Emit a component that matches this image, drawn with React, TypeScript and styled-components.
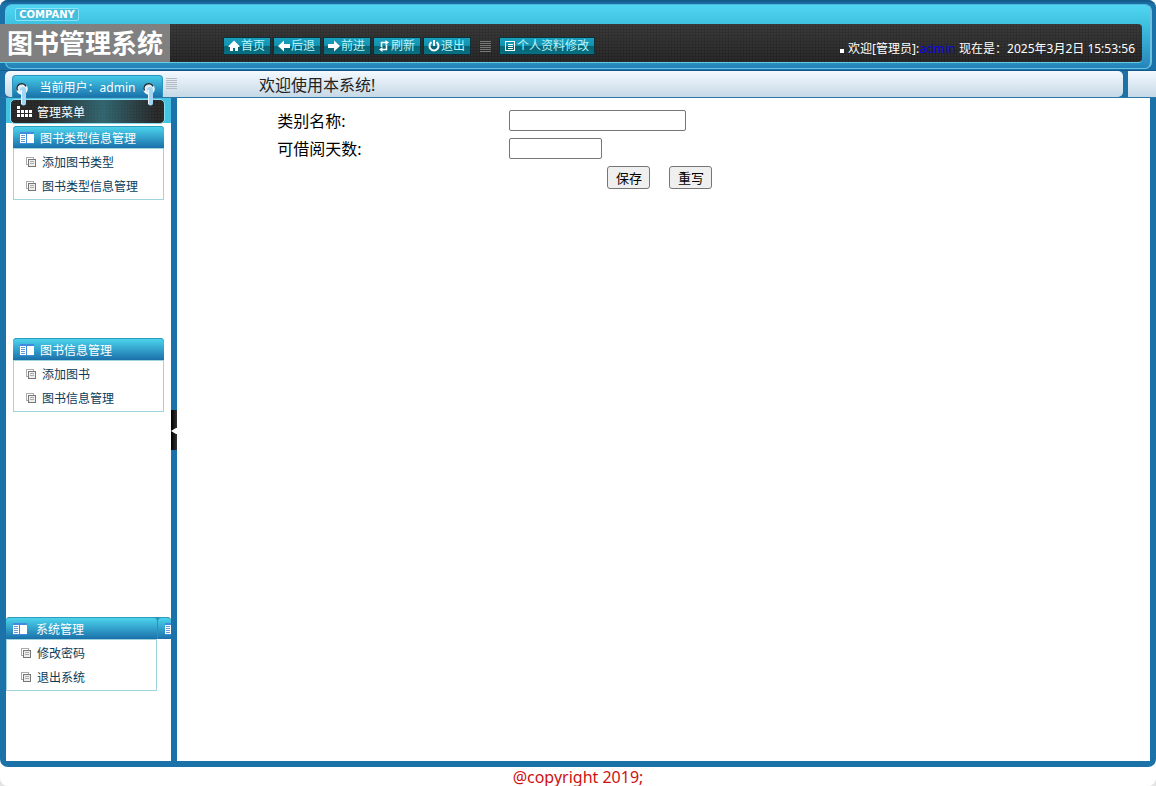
import React, { useState } from "react";
import styled, { createGlobalStyle, css } from "styled-components";

const FRAME = "#1a72a8";
const FONT = '"Noto Sans", "Noto Sans CJK SC", sans-serif';

const GlobalStyle = createGlobalStyle`
  * { box-sizing: border-box; }
  html { background: #e4e4e4; }
  body {
    margin: 0;
    font-family: ${FONT};
    font-size: 12px;
    color: #000;
  }
`;

const Page = styled.div`
  display: flex;
  flex-direction: column;
  height: 100vh;
  overflow: hidden;
  background: #fff;
  border-radius: 0 0 8px 8px;
`;

const Shell = styled.div`
  flex: 1;
  min-height: 0;
  display: flex;
  flex-direction: column;
  background: ${FRAME};
  border-radius: 8px;
  overflow: hidden;
`;

const dotted = css`
  background-image: radial-gradient(circle at 1px 1px, rgba(120, 120, 120, 0.35) 0, transparent 1px),
    linear-gradient(#343434, #222);
  background-size: 3px 3px, 100% 100%;
`;

const Header = styled.header`
  display: flex;
  flex-direction: column;
  height: 70px;
  flex: none;
  background: linear-gradient(#145684 0, ${FRAME} 4px);
`;

const HeaderPanel = styled.div`
  flex: 1;
  margin: 4px 4px 1px 5px;
  padding-right: 8px;
  border: 1px solid #63c4e4;
  border-top-color: #52b4d8;
  border-right: 2px solid #6cc0e0;
  border-radius: 7px;
  background: linear-gradient(#50d6f2 0, #3fc1e0 19px, #2a8cbf 58px, #2482b8 100%);
`;

const BrandRow = styled.div`
  height: 19px;
  padding: 3px 0 0 9px;
`;

const CompanyBadge = styled.span`
  display: block;
  width: 64px;
  height: 13px;
  border: 1px solid #8be2f4;
  border-radius: 2px;
  background: #43bede;
  color: #fff;
  font: bold 10px/11px "DejaVu Sans", sans-serif;
  text-align: center;
`;

const DarkBar = styled.div`
  display: flex;
  height: 39px;
  margin-left: -6px;
  border-bottom: 1px solid #62cfe6;
  border-radius: 0 4px 4px 0;
  ${dotted}
`;

const Logo = styled.h1`
  width: 170px;
  height: 38px;
  margin: 0;
  background: #808080;
  color: #fff;
  font-size: 26px;
  line-height: 38px;
  font-weight: 700;
  text-align: center;
  white-space: nowrap;
`;

const Toolbar = styled.nav`
  display: flex;
  align-items: center;
  gap: 2px;
  margin-left: 53px;
  padding-top: 5px;
`;

const ToolButton = styled.button`
  display: flex;
  align-items: center;
  gap: 1px;
  height: 18px;
  padding: 0 5px 0 4px;
  border: 1px solid #0c2f38;
  background: linear-gradient(#18a0bf 0, #1391af 50%, #066577 50%, #087083 100%);
  color: #b9f4fb;
  font: 12px/16px ${FONT};
  white-space: nowrap;
  cursor: pointer;
`;

const GripLines = styled.span<{ $color: string }>`
  width: 11px;
  height: 12px;
  background: repeating-linear-gradient(${(p) => p.$color} 0 1px, transparent 1px 2px);
`;

const ToolGap = styled.span`
  display: flex;
  padding: 2px 6px 0 7px;
`;

const Status = styled.p`
  display: flex;
  align-items: center;
  margin: 0 7px 0 auto;
  padding-top: 11px;
  color: #fff;
  line-height: 18px;
  white-space: nowrap;
`;

const Bullet = styled.span`
  width: 4px;
  height: 4px;
  margin: 4px 4px 0 0;
  background: #fff;
`;

const UserLink = styled.a`
  margin-right: 4px;
  color: #0c08d8;
  text-decoration: none;
`;

const TabBar = styled.div`
  display: flex;
  flex: none;
  height: 28px;
  gap: 5px;
  padding-left: 5px;
  border-top: 1px solid #14598a;
  border-bottom: 1px solid #2a76a4;
  background: ${FRAME};
`;

const silver = css`
  background: linear-gradient(#f3f9ff, #c6d9e6);
`;

const TabMain = styled.div`
  flex: 1;
  display: flex;
  border-radius: 5px;
  ${silver}
`;

const TabRest = styled.div`
  width: 28px;
  ${silver}
`;

const UserTab = styled.div`
  position: relative;
  width: 151px;
  height: 22px;
  margin: 4px 3px 0 7px;
  border: 1px solid #2b93bc;
  border-bottom: 0;
  border-radius: 4px 4px 0 0;
  background: linear-gradient(#45cbe8, #1a73ac);
  color: #fff;
  line-height: 23px;
  text-align: center;
`;

const Hook = styled.svg<{ $side: "left" | "right" }>`
  position: absolute;
  z-index: 2;
  top: 6px;
  ${(p) => (p.$side === "left" ? "left: 3px;" : "right: 6px;")}
`;

const TabGrip = styled.span`
  display: flex;
  padding-top: 7px;
`;

const Welcome = styled.p`
  margin: 0 0 0 82px;
  color: #222;
  font-size: 16px;
  line-height: 28px;
`;

const Body = styled.div`
  flex: 1;
  min-height: 0;
  display: grid;
  grid-template-columns: 165px 6px 1fr;
  padding: 0 6px 6px;
`;

const Sidebar = styled.aside`
  display: flex;
  flex-direction: column;
  background: #fff;
  overflow: hidden;
`;

const MenuTitleWrap = styled.div`
  flex: none;
  height: 25px;
  padding: 1px 6px 0 4px;
  background: #45c2e2;
`;

const MenuTitle = styled.h2`
  display: flex;
  align-items: center;
  gap: 4px;
  height: 25px;
  margin: 0;
  padding: 2px 0 0 6px;
  border: 1px solid #8adcf0;
  border-radius: 5px;
  background-image: radial-gradient(circle at 1px 1px, rgba(120, 120, 120, 0.3) 0, transparent 1px),
    linear-gradient(90deg, #262626 20%, #2f6570 60%, #262626 95%);
  background-size: 3px 3px, 100% 100%;
  color: #fff;
  font-size: 12px;
  line-height: 22px;
  font-weight: 400;
`;

const GroupStack = styled.div`
  padding-top: 3px;
`;

const Group = styled.section<{ $space: number; $flush?: boolean }>`
  flex: none;
  height: ${(p) => p.$space}px;
  padding: ${(p) => (p.$flush ? "0" : "0 7px")};
`;

const GroupHeads = styled.div`
  display: flex;
  gap: 1px;
  background: #2a93ba;
`;

const GroupHead = styled.h3<{ $rest?: boolean; $gap?: number }>`
  flex: ${(p) => (p.$rest ? "1" : "0 0 151px")};
  display: flex;
  align-items: center;
  gap: ${(p) => p.$gap ?? 6}px;
  height: 22px;
  margin: 0;
  padding: 3px 0 0 7px;
  border-top: 1px solid #2d9dbd;
  border-radius: 4px 4px 0 0;
  background: linear-gradient(#4cd3ec, #1a70aa);
  color: #fff;
  font-size: 12px;
  line-height: 18px;
  font-weight: 400;
  overflow: hidden;
`;

const GroupHeadsClip = styled(GroupHeads)`
  border-radius: 4px 4px 0 0;
`;

const MenuList = styled.ul<{ $indent: number }>`
  width: 151px;
  margin: 0;
  padding: 1px 0 1px ${(p) => p.$indent}px;
  border: 1px solid #9fd3dd;
  list-style: none;
`;

const MenuLink = styled.a`
  display: flex;
  align-items: center;
  gap: 6px;
  height: 24px;
  padding-top: 2px;
  color: #0a3c5a;
  line-height: 22px;
  text-decoration: none;
`;

const Divider = styled.div`
  display: flex;
  align-items: center;
`;

const Handle = styled.button`
  width: 6px;
  height: 40px;
  padding: 2px 0 0;
  border: 0;
  background: linear-gradient(90deg, #000, #333);
  line-height: 0;
  cursor: pointer;
`;

const Content = styled.main`
  padding-top: 9px;
  background: #fff;
`;

const FormTable = styled.table`
  width: 80%;
  margin: 0 auto;
  border-collapse: collapse;
  table-layout: fixed;
  font-size: 16px;
`;

const Cell = styled.td<{ $width?: string }>`
  width: ${(p) => p.$width ?? "auto"};
  height: 28px;
  padding: 0 1px 0 3px;
  vertical-align: top;
  line-height: 28px;
`;

const ValueCell = styled(Cell)`
  padding-left: 1px;
`;

const TextInput = styled.input<{ $width: number }>`
  display: block;
  width: ${(p) => p.$width}px;
  height: 21px;
  margin-top: 3px;
  padding: 1px 2px;
  border: 1px solid #767676;
  border-radius: 2px;
  background: #fff;
`;

const Actions = styled.div`
  display: flex;
  justify-content: center;
  gap: 19px;
  padding: 3px 9px 0 0;
`;

const FormButton = styled.button`
  width: 43px;
  height: 23px;
  padding: 0;
  border: 1px solid #767676;
  border-radius: 3px;
  background: #efefef;
  color: #000;
  font: 13px/20px ${FONT};
`;

const Footer = styled.footer`
  flex: none;
  height: 19px;
  color: #d01010;
  font-size: 16px;
  line-height: 21px;
  text-align: center;
`;

function ToolIcon({ kind }: { kind: string }) {
  return (
    <svg width="12" height="12" viewBox="0 0 12 12" fill="none" stroke="#fff" strokeWidth="2">
      {kind === "home" && <path d="M6 .5.5 6v1H2v4h3V8h2v3h3V7h1.5V6Z" fill="#fff" stroke="none" />}
      {kind === "back" && <path d="M0 6 6 .5V4h6v4H6v3.500Z" fill="#fff" stroke="none" />}
      {kind === "forward" && <path d="M12 6 6 .5V4H0v4h6v3.500Z" fill="#fff" stroke="none" />}
      {kind === "refresh" && (
        <>
          <path d="M3.500 7V2.500H8M8.500 4.500V9.500H4" strokeWidth="1.600" />
          <path d="M7.500 0 11 2.500 7.500 5ZM4.500 7 1 9.500 4.500 12Z" fill="#fff" stroke="none" />
        </>
      )}
      {kind === "power" && <path d="M3.500 2.200a4.500 4.500 0 1 0 5 0M6 0v6" />}
      {kind === "profile" && (
        <path d="M1.500 1.500h9v9h-9ZM3.500 4h5M3.500 6h5M3.500 8h5" strokeWidth="1" shapeRendering="crispEdges" />
      )}
    </svg>
  );
}

const HookMark = ({ side }: { side: "left" | "right" }) => (
  <Hook $side={side} width="13" height="25" viewBox="0 0 13 25" aria-hidden="true">
    <circle cx="6" cy="7" r="5" fill="#dfeef6" stroke="#f4fafd" strokeWidth="1.500" />
    <path d="M1.500 8.500a4.700 4.700 0 0 1 8.500-4.200" fill="none" stroke="#1b2c38" strokeWidth="1.500" />
    <path d="M4 8a3 3 0 0 1 6 0v13a2.500 2.500 0 0 1-5 0V9Z" fill="#a4d6f4" />
    <path d="M5.500 8v14" stroke="#eaf8ff" />
  </Hook>
);

const Icon = styled.svg`
  flex: none;
  margin-bottom: 2px;
`;

const GridIcon = () => (
  <Icon width="16" height="12" viewBox="0 0 16 12" fill="#fff" aria-hidden="true">
    <path d="M0 0h3v3H0ZM0 4h3v3H0ZM4 4h3v3H4ZM8 4h3v3H8ZM12 4h3v3h-3ZM0 8h3v3H0ZM4 8h3v3H4ZM8 8h3v3H8ZM12 8h3v3h-3Z" />
  </Icon>
);

const PanelIcon = () => (
  <Icon width="14" height="12" viewBox="0 0 14 12" aria-hidden="true" shapeRendering="crispEdges">
    <path d="M0 0h14v12H0Z" fill="#3f8be0" />
    <path d="M0 2h6v9H0ZM7 2h7v9H7Z" fill="#fff" />
    <path d="M1 3.500h4M1 5.500h4M1 7.500h4M1 9.500h4" stroke="#6c9ccf" />
  </Icon>
);

const PagesIcon = () => (
  <Icon width="10" height="10" viewBox="0 0 10 10" fill="none" shapeRendering="crispEdges" aria-hidden="true">
    <path d="M2 7.500H.5v-7h7V2" stroke="#aaa" />
    <path d="M2.500 2.500h7v7h-7Z" fill="#eee" stroke="#777" />
    <path d="M4 4.500h4M4 6.500h4" stroke="#aaa" />
  </Icon>
);

const TOOLS = [
  ["home", "首页"],
  ["back", "后退"],
  ["forward", "前进"],
  ["refresh", "刷新"],
  ["power", "退出"],
];

interface MenuGroup {
  title: string;
  items: string[];
  space: number;
  flush?: boolean;
}

const GROUPS: MenuGroup[] = [
  { title: "图书类型信息管理", items: ["添加图书类型", "图书类型信息管理"], space: 212 },
  { title: "图书信息管理", items: ["添加图书", "图书信息管理"], space: 279 },
  { title: "系统管理", items: ["修改密码", "退出系统"], space: 76, flush: true },
];

export default function App() {
  const [category, setCategory] = useState("");
  const [days, setDays] = useState("");

  return (
    <Page>
      <GlobalStyle />
      <Shell>
        <Header>
          <HeaderPanel>
            <BrandRow>
              <CompanyBadge>COMPANY</CompanyBadge>
            </BrandRow>
            <DarkBar>
              <Logo>图书管理系统</Logo>
              <Toolbar>
                {TOOLS.map(([kind, label]) => (
                  <ToolButton key={kind} type="button">
                    <ToolIcon kind={kind} />
                    {label}
                  </ToolButton>
                ))}
                <ToolGap>
                  <GripLines $color="#777" />
                </ToolGap>
                <ToolButton type="button">
                  <ToolIcon kind="profile" />
                  个人资料修改
                </ToolButton>
              </Toolbar>
              <Status>
                <Bullet />
                欢迎[管理员]:<UserLink href="#user">admin</UserLink>
                <span>现在是：2025年3月2日 15:53:56</span>
              </Status>
            </DarkBar>
          </HeaderPanel>
        </Header>
        <TabBar>
          <TabMain>
            <UserTab>
              <HookMark side="left" />
              当前用户：admin
              <HookMark side="right" />
            </UserTab>
            <TabGrip>
              <GripLines $color="#b4bcc2" />
            </TabGrip>
            <Welcome>欢迎使用本系统!</Welcome>
          </TabMain>
          <TabRest />
        </TabBar>
        <Body>
          <Sidebar>
            <MenuTitleWrap>
              <MenuTitle>
                <GridIcon />
                管理菜单
              </MenuTitle>
            </MenuTitleWrap>
            <GroupStack>
              {GROUPS.map((group) => (
                <Group key={group.title} $space={group.space} $flush={group.flush}>
                  <GroupHeadsClip>
                    <GroupHead $gap={group.flush ? 9 : 6}>
                      <PanelIcon />
                      {group.title}
                    </GroupHead>
                    {group.flush && (
                      <GroupHead $rest as="div">
                        <PanelIcon />
                      </GroupHead>
                    )}
                  </GroupHeadsClip>
                  <MenuList $indent={group.flush ? 14 : 12}>
                    {group.items.map((item) => (
                      <li key={item}>
                        <MenuLink href="#menu">
                          <PagesIcon />
                          {item}
                        </MenuLink>
                      </li>
                    ))}
                  </MenuList>
                </Group>
              ))}
            </GroupStack>
          </Sidebar>
          <Divider>
            <Handle type="button" aria-label="收起菜单">
              <svg width="6" height="8" viewBox="0 0 6 8">
                <path d="M0 4 5 1h1v6H5Z" fill="#fff" />
              </svg>
            </Handle>
          </Divider>
          <Content>
            <form onSubmit={(e) => e.preventDefault()}>
              <FormTable>
                <tbody>
                  <tr>
                    <Cell $width="30%">
                      <label htmlFor="category">类别名称:</label>
                    </Cell>
                    <ValueCell>
                      <TextInput
                        id="category"
                        $width={177}
                        value={category}
                        onChange={(e) => setCategory(e.target.value)}
                      />
                    </ValueCell>
                  </tr>
                  <tr>
                    <Cell>
                      <label htmlFor="days">可借阅天数:</label>
                    </Cell>
                    <ValueCell>
                      <TextInput id="days" $width={93} value={days} onChange={(e) => setDays(e.target.value)} />
                    </ValueCell>
                  </tr>
                  <tr>
                    <Cell colSpan={2}>
                      <Actions>
                        <FormButton type="submit">保存</FormButton>
                        <FormButton
                          type="button"
                          onClick={() => {
                            setCategory("");
                            setDays("");
                          }}
                        >
                          重写
                        </FormButton>
                      </Actions>
                    </Cell>
                  </tr>
                </tbody>
              </FormTable>
            </form>
          </Content>
        </Body>
      </Shell>
      <Footer>@copyright 2019;</Footer>
    </Page>
  );
}
